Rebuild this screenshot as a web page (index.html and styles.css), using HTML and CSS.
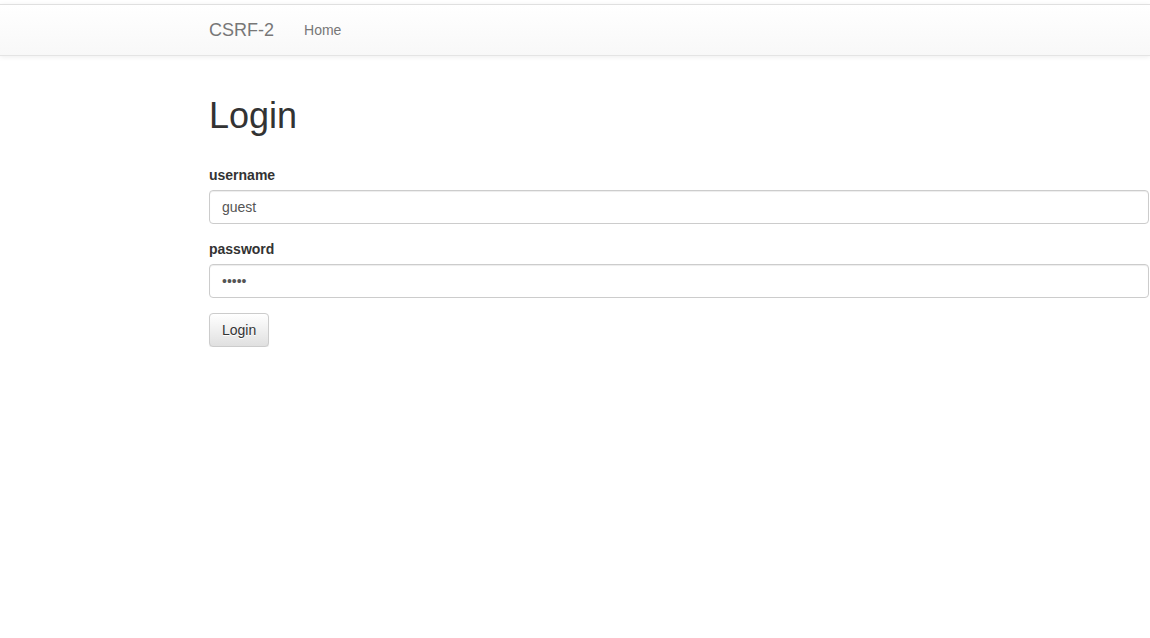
FILE: index.html
```html
<!DOCTYPE html>
<html lang="en">
<head>
    <meta charset="UTF-8">
    <meta name="viewport" content="width=device-width, initial-scale=1.0">
    <title>CSRF-2</title>
    <link rel="stylesheet" href="styles.css">
</head>
<body>
    <nav class="navbar">
        <div class="container navbar-inner">
            <a class="navbar-brand" href="#">CSRF-2</a>
            <ul class="nav">
                <li><a href="#">Home</a></li>
            </ul>
        </div>
    </nav>

    <div class="container page">
        <h1>Login</h1>
        <form class="login-form" onsubmit="return false;">
            <div class="form-group">
                <label for="username">username</label>
                <input type="text" id="username" class="form-control" value="guest">
            </div>
            <div class="form-group">
                <label for="password">password</label>
                <input type="password" id="password" class="form-control" value="guest">
            </div>
            <button type="submit" class="btn">Login</button>
        </form>
    </div>
</body>
</html>
```

FILE: styles.css
```css
* {
    box-sizing: border-box;
}
body {
    margin: 0;
    font-family: "Liberation Sans", Arial, sans-serif;
    font-size: 14px;
    line-height: 1.42857143;
    color: #333;
    background-color: #fff;
}
.container {
    width: 970px;
    margin-left: 194px;
    padding-left: 15px;
    padding-right: 15px;
}
.page {
    display: flow-root;
}
.navbar {
    margin-top: 4px;
    margin-bottom: 20px;
    min-height: 50px;
    border-top: 1px solid #e0e0e0;
    border-bottom: 1px solid #e4e4e4;
    background-image: linear-gradient(to bottom, #fff 0%, #f8f8f8 100%);
    box-shadow: inset 0 1px 0 rgba(255, 255, 255, 0.15), 0 1px 5px rgba(0, 0, 0, 0.075);
}
.navbar-inner {
    display: flex;
    align-items: center;
}
.navbar-brand {
    margin-left: -15px;
    padding: 15px;
    height: 50px;
    font-size: 18px;
    line-height: 20px;
    color: #777;
    text-decoration: none;
    text-shadow: 0 1px 0 rgba(255, 255, 255, 0.25);
}
.nav {
    display: flex;
    margin: 0;
    padding: 0;
    list-style: none;
}
.nav a {
    display: block;
    padding: 15px;
    line-height: 20px;
    color: #777;
    text-decoration: none;
    text-shadow: 0 1px 0 rgba(255, 255, 255, 0.25);
}
h1 {
    margin: 20px 0 10px;
    font-size: 36px;
    font-weight: 500;
    line-height: 1.1;
    color: #333;
}
.login-form {
    margin-top: 29px;
}
.form-group {
    margin-bottom: 15px;
}
label {
    display: inline-block;
    margin-bottom: 5px;
    font-weight: bold;
}
.form-control {
    display: block;
    width: 100%;
    height: 34px;
    padding: 6px 12px;
    font-family: inherit;
    font-size: 14px;
    line-height: 1.42857143;
    color: #555;
    background-color: #fff;
    border: 1px solid #ccc;
    border-radius: 4px;
    box-shadow: inset 0 1px 1px rgba(0, 0, 0, 0.075);
    outline: none;
}
.btn {
    display: inline-block;
    height: 34px;
    padding: 6px 12px;
    font-family: inherit;
    font-size: 14px;
    line-height: 1.42857143;
    color: #333;
    background-image: linear-gradient(to bottom, #fff 0%, #e0e0e0 100%);
    border: 1px solid #ccc;
    border-radius: 4px;
    text-shadow: 0 1px 0 #fff;
    box-shadow: inset 0 1px 0 rgba(255, 255, 255, 0.15), 0 1px 1px rgba(0, 0, 0, 0.075);
    cursor: pointer;
}
.btn:hover {
    background-image: none;
    background-color: #e0e0e0;
}
```
